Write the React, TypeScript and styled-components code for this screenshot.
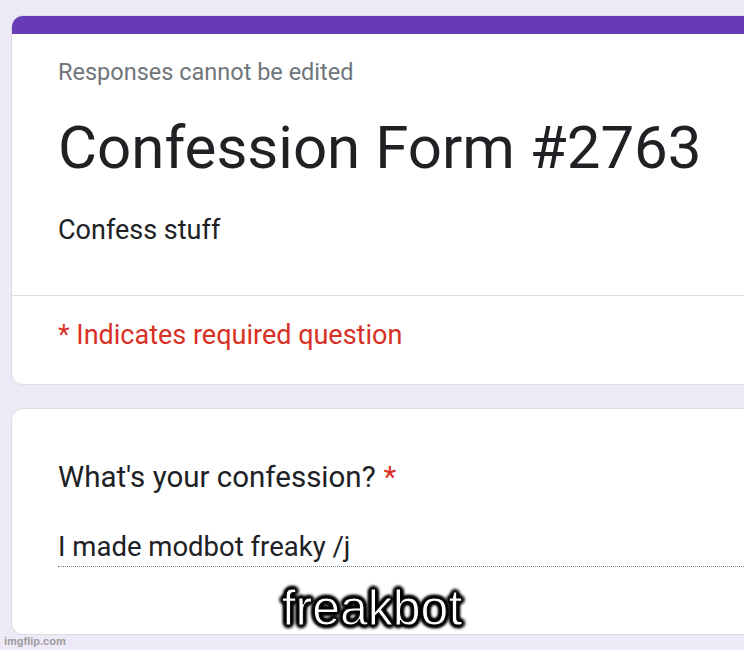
import React from 'react'
import styled, { createGlobalStyle } from 'styled-components'

const GlobalStyle = createGlobalStyle`
     html, body {
          margin: 0;
          padding: 0;
          background: #ede9f7;
          overflow: hidden;
     }
     body {
          font-family: Roboto, "Liberation Sans", Arial, sans-serif;
     }
`

export default function App() {
     return (
          <>
               <GlobalStyle />
               <Page>
                    <Card $first>
                         <TopBar />
                         <Header>
                              <Notice>Responses cannot be edited</Notice>
                              <Title>Confession Form #2763</Title>
                              <Description>Confess stuff</Description>
                         </Header>
                         <Divider />
                         <Required>* Indicates required question</Required>
                    </Card>

                    <Card>
                         <Question>
                              What's your confession?<Star>*</Star>
                         </Question>
                         <Answer>I made modbot freaky /j</Answer>
                    </Card>

                    <Caption>freakbot</Caption>
                    <Watermark>imgflip.com</Watermark>
               </Page>
          </>
     )
}

const Page = styled.div`
     position: relative;
     width: 744px;
     height: 650px;
     padding: 15px 0 0 11px;
     box-sizing: border-box;
     overflow: hidden;
`

const Card = styled.div<{ $first?: boolean }>`
     width: 760px;
     background: #fff;
     border: 1px solid #dadce0;
     border-radius: 12px;
     overflow: hidden;
     box-sizing: border-box;
     margin-bottom: 23px;
     padding-bottom: ${(p) => (p.$first ? '33px' : '67px')};
     padding-top: ${(p) => (p.$first ? '0' : '51px')};
`

const TopBar = styled.div`
     height: 19px;
     background: #673ab7;
     margin: -1px -1px 0;
`

const Header = styled.div`
     padding: 24px 0 49px 46px;
`

const Notice = styled.div`
     font-size: 23.5px;
     line-height: 28px;
     color: #70757a;
`

const Title = styled.div`
     margin-top: 26px;
     font-size: 60px;
     line-height: 72px;
     color: #202124;
`

const Description = styled.div`
     margin-top: 30px;
     font-size: 27px;
     line-height: 32px;
     color: #202124;
`

const Divider = styled.div`
     height: 1px;
     background: #dadce0;
`

const Required = styled.div`
     padding: 23px 0 0 46px;
     font-size: 27px;
     line-height: 32px;
     color: #d93025;
`

const Question = styled.div`
     padding-left: 46px;
     font-size: 29.5px;
     line-height: 34px;
     color: #202124;
`

const Star = styled.span`
     margin-left: 8px;
     color: #d93025;
`

const Answer = styled.div`
     margin: 37px 0 0 46px;
     padding-bottom: 3px;
     font-size: 27.5px;
     line-height: 32px;
     color: #202124;
     border-bottom: 1px dotted #80868b;
`

const Caption = styled.div`
     position: absolute;
     left: 0;
     right: 0;
     top: 580px;
     text-align: center;
     font-family: "Liberation Sans", Arial, sans-serif;
     font-size: 50px;
     line-height: 56px;
     color: #fff;
     -webkit-text-stroke: 1px #000;
     text-shadow:
          2px 2px 3px #000, -2px -2px 3px #000, 2px -2px 3px #000, -2px 2px 3px #000,
          0 3px 3px #000, 0 -3px 3px #000, 3px 0 3px #000, -3px 0 3px #000;
`

const Watermark = styled.div`
     position: absolute;
     left: 4px;
     bottom: 2px;
     font-family: "Liberation Sans", Arial, sans-serif;
     font-size: 11px;
     font-weight: bold;
     line-height: 14px;
     color: rgba(140, 140, 140, 0.85);
`
